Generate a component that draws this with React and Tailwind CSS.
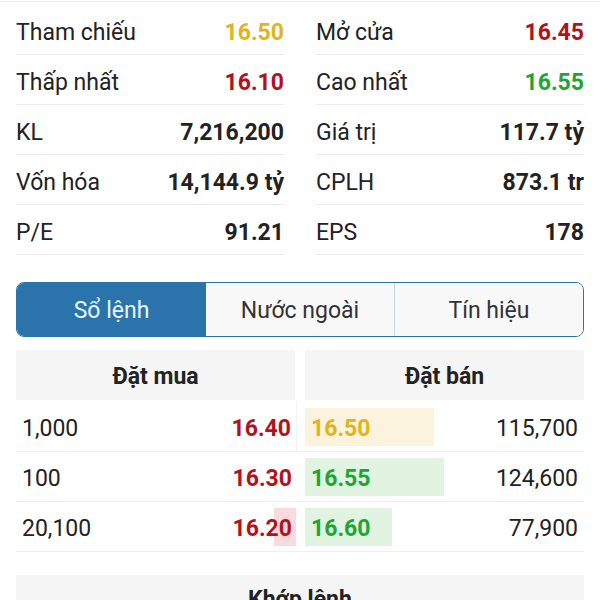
import React from "react";

const stats = [
  [
    { label: "Tham chiếu", value: "16.50", color: "text-[#e2b41c]" },
    { label: "Mở cửa", value: "16.45", color: "text-[#b3121c]" },
  ],
  [
    { label: "Thấp nhất", value: "16.10", color: "text-[#b3121c]" },
    { label: "Cao nhất", value: "16.55", color: "text-[#1ea532]" },
  ],
  [
    { label: "KL", value: "7,216,200", color: "text-[#222]" },
    { label: "Giá trị", value: "117.7 tỷ", color: "text-[#222]" },
  ],
  [
    { label: "Vốn hóa", value: "14,144.9 tỷ", color: "text-[#222]" },
    { label: "CPLH", value: "873.1 tr", color: "text-[#222]" },
  ],
  [
    { label: "P/E", value: "91.21", color: "text-[#222]" },
    { label: "EPS", value: "178", color: "text-[#222]" },
  ],
];

const orders = [
  { buyQty: "1,000", buyPrice: "16.40", buyBar: 0, sellPrice: "16.50", sellColor: "text-[#e2b41c]", sellBar: 129, sellBg: "bg-[#fbf3de]", sellQty: "115,700" },
  { buyQty: "100", buyPrice: "16.30", buyBar: 0, sellPrice: "16.55", sellColor: "text-[#1ea532]", sellBar: 139, sellBg: "bg-[#e0f4e1]", sellQty: "124,600" },
  { buyQty: "20,100", buyPrice: "16.20", buyBar: 22, sellPrice: "16.60", sellColor: "text-[#1ea532]", sellBar: 87, sellBg: "bg-[#e0f4e1]", sellQty: "77,900" },
];

const StatCell = ({ item }) => (
  <div className="flex items-center justify-between h-[50px] border-b border-[#ececec] pt-[8px]">
    <span className="text-[#222]">{item.label}</span>
    <span className={`font-bold ${item.color}`}>{item.value}</span>
  </div>
);

export default function App() {
  return (
    <div className="w-[600px] h-[600px] overflow-hidden bg-white text-[23px] text-[#222] font-['Roboto',sans-serif]">
      <div className="h-px bg-[#eee] mt-px" />
      <div className="px-4 pt-[3px]">
        <div className="grid grid-cols-2 gap-x-8">
          {stats.map((row, i) => (
            <React.Fragment key={i}>
              <StatCell item={row[0]} />
              <StatCell item={row[1]} />
            </React.Fragment>
          ))}
        </div>

        <div className="mt-[27px] flex h-[55px] rounded-lg border border-[#2b74ab] overflow-hidden">
          <div className="w-[189px] bg-[#2b74ab] text-[#e6f6ff] flex items-center justify-center pt-[4px]">Sổ lệnh</div>
          <div className="flex-1 bg-[#f8f8f8] flex items-center justify-center text-[#333] border-r border-[#cfd6dc] pt-[4px]">Nước ngoài</div>
          <div className="flex-1 bg-[#f8f8f8] flex items-center justify-center text-[#333] pt-[4px]">Tín hiệu</div>
        </div>

        <div className="mt-[13px] flex gap-[10px] h-[50px] font-bold">
          <div className="w-[279px] bg-[#f5f5f5] flex items-center justify-center pt-[4px]">Đặt mua</div>
          <div className="flex-1 bg-[#f5f5f5] flex items-center justify-center pt-[4px]">Đặt bán</div>
        </div>

        <div className="mt-[2px]">
          {orders.map((o, i) => (
            <div key={i} className="flex h-[50px] border-b border-[#efefef]">
              <div className={`relative w-[281px] flex items-center justify-between pl-[6px] pr-[5px] pt-[6px] ${i === 0 ? "border-r border-[#f3f3f3]" : ""}`}>
                {o.buyBar > 0 && (
                  <div className="absolute right-[1px] top-[6px] bottom-[5px] bg-[#fadadd]" style={{ width: o.buyBar }} />
                )}
                <span className="relative">{o.buyQty}</span>
                <span className="relative font-bold text-[#b3121c]">{o.buyPrice}</span>
              </div>
              <div className="relative flex-1 ml-[8px] flex items-center justify-between pl-[6px] pr-[6px] pt-[6px]">
                <div className={`absolute left-0 top-[6px] bottom-[5px] ${o.sellBg}`} style={{ width: o.sellBar }} />
                <span className={`relative font-bold ${o.sellColor}`}>{o.sellPrice}</span>
                <span className="relative">{o.sellQty}</span>
              </div>
            </div>
          ))}
        </div>

        <div className="mt-[23px] h-[50px] bg-[#f5f5f5] flex items-center justify-center font-bold">
          Khớp lệnh
        </div>
      </div>
    </div>
  );
}
